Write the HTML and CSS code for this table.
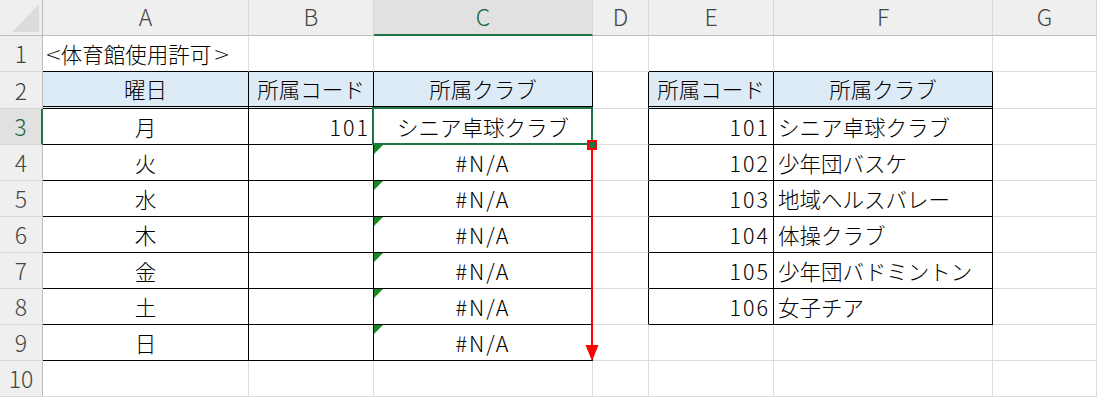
FILE: index.html
```html
<!DOCTYPE html>
<html lang="ja">
<head>
<meta charset="utf-8">
<title>体育館使用許可</title>
<link rel="stylesheet" href="styles.css">
</head>
<body>
<div class="sheet">
  <!-- column headers -->
  <div class="corner"><span class="corner-tri"></span></div>
  <div class="colhd">A</div>
  <div class="colhd">B</div>
  <div class="colhd sel">C</div>
  <div class="colhd">D</div>
  <div class="colhd">E</div>
  <div class="colhd">F</div>
  <div class="colhd">G</div>

  <!-- row 1 -->
  <div class="rowhd">1</div>
  <div class="cell left bb"><span class="bracket-l">&lt;</span>体育館使用許可<span class="bracket-r">&gt;</span></div>
  <div class="cell bb"></div>
  <div class="cell bb"></div>
  <div class="cell"></div>
  <div class="cell bb"></div>
  <div class="cell bb"></div>
  <div class="cell"></div>

  <!-- row 2 -->
  <div class="rowhd">2</div>
  <div class="cell head br">曜日</div>
  <div class="cell head br">所属コード</div>
  <div class="cell head br">所属クラブ</div>
  <div class="cell br"></div>
  <div class="cell head br">所属コード</div>
  <div class="cell head br">所属クラブ</div>
  <div class="cell"></div>

  <!-- row 3 -->
  <div class="rowhd sel">3</div>
  <div class="cell br bb">月</div>
  <div class="cell num br bb"><span class="lat">101</span></div>
  <div class="cell br bb active">シニア卓球クラブ
    <span class="selection"></span>
    <span class="fill-handle"></span>
    <svg class="drag-arrow" width="16" height="214" viewBox="0 0 16 214">
      <line x1="8" y1="0" x2="8" y2="200" stroke="#ff0000" stroke-width="2"/>
      <polygon points="1.5,196 14.5,196 8,212" fill="#ff0000"/>
    </svg>
  </div>
  <div class="cell br"></div>
  <div class="cell num br bb"><span class="lat">101</span></div>
  <div class="cell left br bb">シニア卓球クラブ</div>
  <div class="cell"></div>

  <!-- row 4 -->
  <div class="rowhd">4</div>
  <div class="cell br bb">火</div>
  <div class="cell br bb"></div>
  <div class="cell br bb"><span class="err"></span><span class="lat">#N/A</span></div>
  <div class="cell br"></div>
  <div class="cell num br bb"><span class="lat">102</span></div>
  <div class="cell left br bb">少年団バスケ</div>
  <div class="cell"></div>

  <!-- row 5 -->
  <div class="rowhd">5</div>
  <div class="cell br bb">水</div>
  <div class="cell br bb"></div>
  <div class="cell br bb"><span class="err"></span><span class="lat">#N/A</span></div>
  <div class="cell br"></div>
  <div class="cell num br bb"><span class="lat">103</span></div>
  <div class="cell left br bb">地域ヘルスバレー</div>
  <div class="cell"></div>

  <!-- row 6 -->
  <div class="rowhd">6</div>
  <div class="cell br bb">木</div>
  <div class="cell br bb"></div>
  <div class="cell br bb"><span class="err"></span><span class="lat">#N/A</span></div>
  <div class="cell br"></div>
  <div class="cell num br bb"><span class="lat">104</span></div>
  <div class="cell left br bb">体操クラブ</div>
  <div class="cell"></div>

  <!-- row 7 -->
  <div class="rowhd">7</div>
  <div class="cell br bb">金</div>
  <div class="cell br bb"></div>
  <div class="cell br bb"><span class="err"></span><span class="lat">#N/A</span></div>
  <div class="cell br"></div>
  <div class="cell num br bb"><span class="lat">105</span></div>
  <div class="cell left br bb">少年団バドミントン</div>
  <div class="cell"></div>

  <!-- row 8 -->
  <div class="rowhd">8</div>
  <div class="cell br bb">土</div>
  <div class="cell br bb"></div>
  <div class="cell br bb"><span class="err"></span><span class="lat">#N/A</span></div>
  <div class="cell br"></div>
  <div class="cell num br bb"><span class="lat">106</span></div>
  <div class="cell left br bb">女子チア</div>
  <div class="cell"></div>

  <!-- row 9 -->
  <div class="rowhd">9</div>
  <div class="cell br bb">日</div>
  <div class="cell br bb"></div>
  <div class="cell br bb"><span class="err"></span><span class="lat">#N/A</span></div>
  <div class="cell"></div>
  <div class="cell"></div>
  <div class="cell"></div>
  <div class="cell"></div>

  <!-- row 10 -->
  <div class="rowhd">10</div>
  <div class="cell"></div>
  <div class="cell"></div>
  <div class="cell"></div>
  <div class="cell"></div>
  <div class="cell"></div>
  <div class="cell"></div>
  <div class="cell"></div>
</div>
</body>
</html>
```

FILE: styles.css
```css
html, body {
  margin: 0;
  padding: 0;
  background: #ffffff;
  overflow: hidden;
}

.sheet {
  display: grid;
  grid-template-columns: 43px 206px 125px 219px 56px 125px 219px 1fr;
  grid-template-rows: 36px 36px 37px repeat(8, 36px);
  width: 1097px;
  font-family: "Noto Sans CJK JP", "Noto Sans", sans-serif;
  font-size: 21.5px;
  font-weight: 300;
  color: #000000;
}

.sheet > div {
  box-sizing: border-box;
  display: flex;
  align-items: center;
  justify-content: center;
  white-space: nowrap;
  line-height: 1;
  min-width: 0;
}

/* header strip */
.corner {
  background: #efefef;
  border-right: 1px solid #bdbdbd;
  border-bottom: 1px solid #bdbdbd;
  position: relative;
}

.corner-tri {
  position: absolute;
  right: 3px;
  bottom: 3px;
  width: 0;
  height: 0;
  border-left: 27px solid transparent;
  border-bottom: 28px solid #dcdcdc;
}

.colhd {
  background: #efefef;
  color: #444444;
  font-size: 23px;
  border-right: 1px solid #d7d7d7;
  border-bottom: 1px solid #bdbdbd;
  padding-bottom: 2px;
}

.rowhd {
  background: #efefef;
  color: #444444;
  font-size: 23px;
  border-right: 1px solid #bdbdbd;
  border-bottom: 1px solid #d7d7d7;
}

.colhd.sel {
  background: #e1e1e1;
  color: #17663a;
  border-bottom: 2px solid #217346;
}

.rowhd.sel {
  background: #e1e1e1;
  color: #17663a;
  border-right: 2px solid #217346;
}

/* cells */
.cell {
  position: relative;
  border-right: 1px solid #dcdcdc;
  border-bottom: 1px solid #dcdcdc;
  padding: 0 4px;
}

.cell.left {
  justify-content: flex-start;
}

.cell.num {
  justify-content: flex-end;
  padding-right: 3px;
}

.cell.br {
  border-right-color: #000000;
}

.cell.bb {
  border-bottom-color: #000000;
}

.cell.head {
  background: #ddebf7;
  border-bottom: 3px double #000000;
}

.lat {
  letter-spacing: 2px;
}

/* angle brackets use a wider latin face */
.bracket-l,
.bracket-r {
  font-family: "DejaVu Sans", sans-serif;
  font-weight: 200;
  font-size: 20px;
}

.bracket-l {
  margin: 0 -1px 0 -2px;
}

.bracket-r {
  margin: 0 -2px 0 2px;
}

/* error indicator in the top-left corner */
.err {
  position: absolute;
  top: 0;
  left: 0;
  width: 0;
  height: 0;
  border-top: 9px solid #168a1f;
  border-right: 9px solid transparent;
}

/* active cell outline, fill handle and drag direction */
.selection {
  position: absolute;
  top: -2px;
  left: -2px;
  right: -1px;
  bottom: -1px;
  border: 2px solid #217346;
  z-index: 2;
}

.fill-handle {
  position: absolute;
  left: 213px;
  top: 31px;
  width: 10px;
  height: 10px;
  box-sizing: border-box;
  border: 2px solid #ff0000;
  background: #217346;
  z-index: 3;
}

.drag-arrow {
  position: absolute;
  left: 210px;
  top: 40px;
  z-index: 2;
}
```
